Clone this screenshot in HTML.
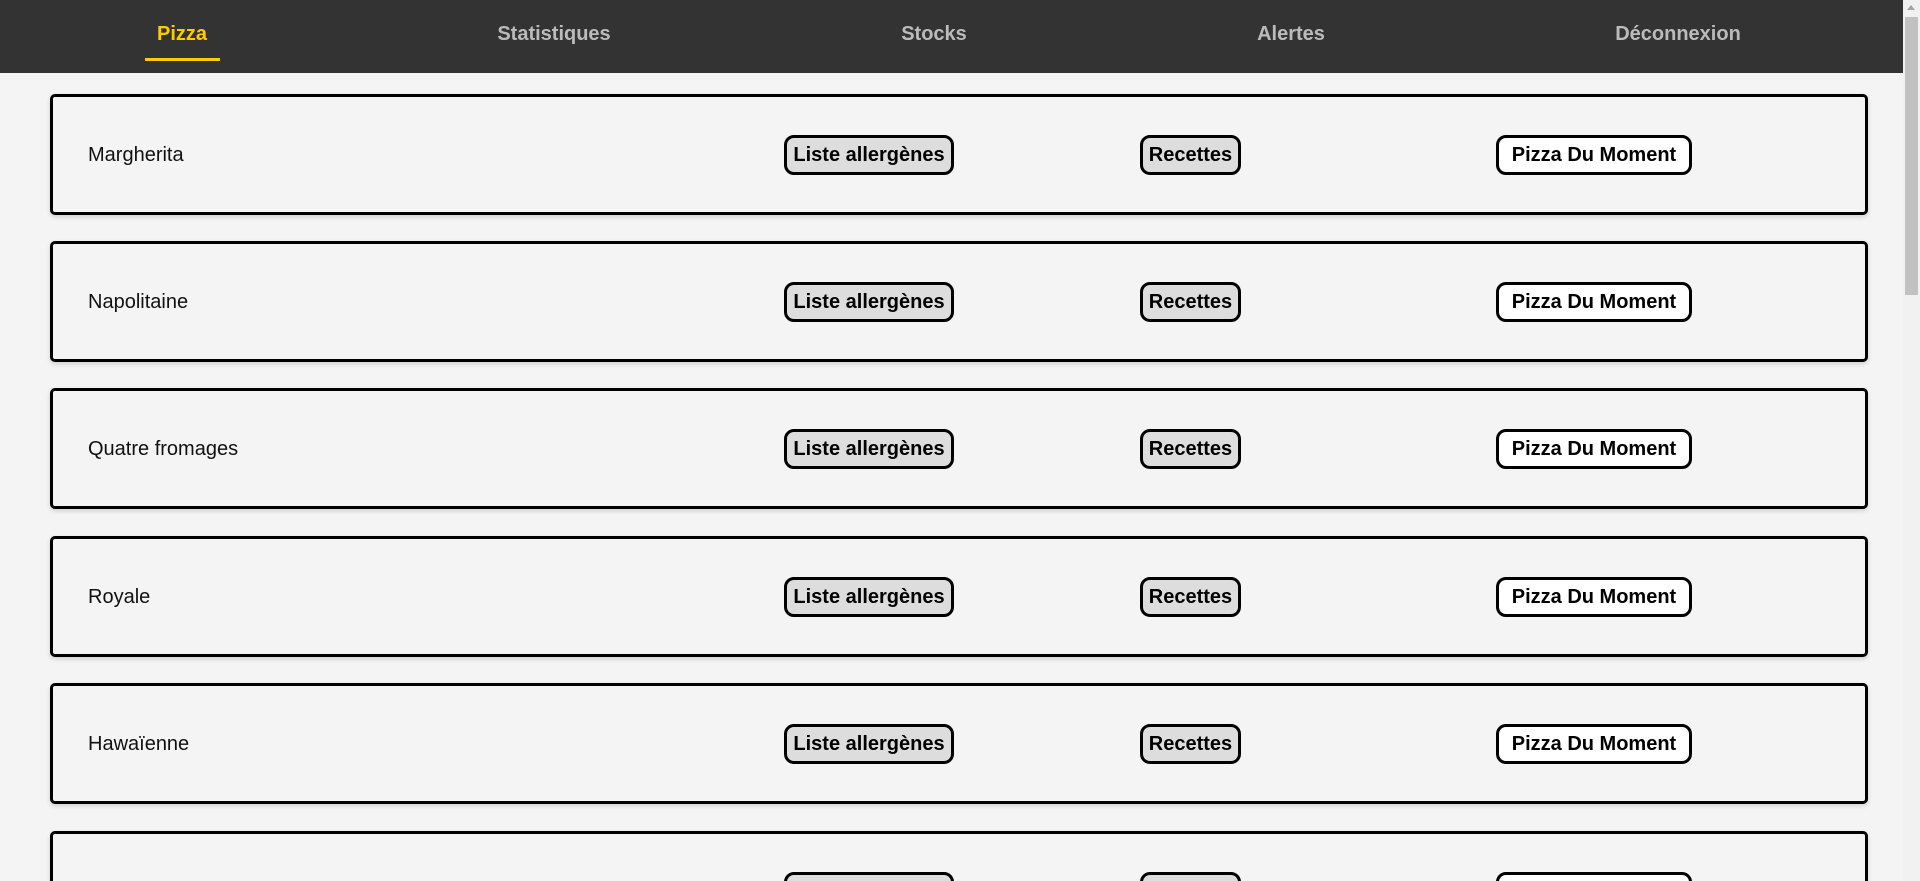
<!DOCTYPE html>
<html><head><meta charset="utf-8"><style>
*{box-sizing:border-box;margin:0;padding:0}
html,body{width:1920px;height:881px;overflow:hidden;background:#f4f4f4;font-family:"Liberation Sans",Arial,sans-serif}
#wrap{position:relative;width:1920px;height:881px;overflow:hidden}
.nav{position:absolute;left:0;top:0;width:1903px;height:73px;background:#333}
.ni{position:absolute;top:23px;font-size:20px;font-weight:bold;color:#bbb;transform:translateX(-50%);white-space:nowrap}
.ni.act{color:#ffcc00}
.ul{position:absolute;left:145px;top:58px;width:75px;height:3px;background:#ffcc00}
.card{position:absolute;left:50px;width:1818px;height:121px;border:3px solid #000;border-radius:5px;box-shadow:0 2px 5px rgba(0,0,0,.15);background:#f4f4f4;overflow:hidden}
.last{height:50px;border-bottom:none;border-radius:5px 5px 0 0}
.name{position:absolute;left:35px;top:47px;font-size:20px;color:#111}
.btn{position:absolute;top:38px;height:40px;border:3px solid #000;border-radius:10px;background:#ddd;font-size:20px;font-weight:bold;line-height:34px;text-align:center;color:#000;white-space:nowrap}
.b1{left:731px;width:170px}
.b2{left:1087px;width:101px}
.b3{left:1443px;width:196px;background:#fff}
.sb{position:absolute;right:0;top:0;width:17px;height:881px;background:#f1f1f1}
.th{position:absolute;left:2px;top:17px;width:13px;height:278px;background:#c1c1c1}
.ar{position:absolute;left:4px;top:5px;width:0;height:0;border-left:4px solid transparent;border-right:4px solid transparent;border-bottom:5px solid #a3a3a3}
</style></head><body><div id="wrap">
<div class="nav">
<div class="ni act" style="left:182px">Pizza</div>
<div class="ul"></div>
<div class="ni" style="left:554px">Statistiques</div>
<div class="ni" style="left:934px">Stocks</div>
<div class="ni" style="left:1291px">Alertes</div>
<div class="ni" style="left:1678px">Déconnexion</div>
</div>
<div class="card" style="top:94px"><div class="name">Margherita</div><div class="btn b1">Liste allergènes</div><div class="btn b2">Recettes</div><div class="btn b3">Pizza Du Moment</div></div>
<div class="card" style="top:241px"><div class="name">Napolitaine</div><div class="btn b1">Liste allergènes</div><div class="btn b2">Recettes</div><div class="btn b3">Pizza Du Moment</div></div>
<div class="card" style="top:388px"><div class="name">Quatre fromages</div><div class="btn b1">Liste allergènes</div><div class="btn b2">Recettes</div><div class="btn b3">Pizza Du Moment</div></div>
<div class="card" style="top:536px"><div class="name">Royale</div><div class="btn b1">Liste allergènes</div><div class="btn b2">Recettes</div><div class="btn b3">Pizza Du Moment</div></div>
<div class="card" style="top:683px"><div class="name">Hawaïenne</div><div class="btn b1">Liste allergènes</div><div class="btn b2">Recettes</div><div class="btn b3">Pizza Du Moment</div></div>
<div class="card last" style="top:831px"><div class="name">Calzone</div><div class="btn b1">Liste allergènes</div><div class="btn b2">Recettes</div><div class="btn b3">Pizza Du Moment</div></div>
<div class="sb"><div class="ar"></div><div class="th"></div></div>
</div></body></html>
